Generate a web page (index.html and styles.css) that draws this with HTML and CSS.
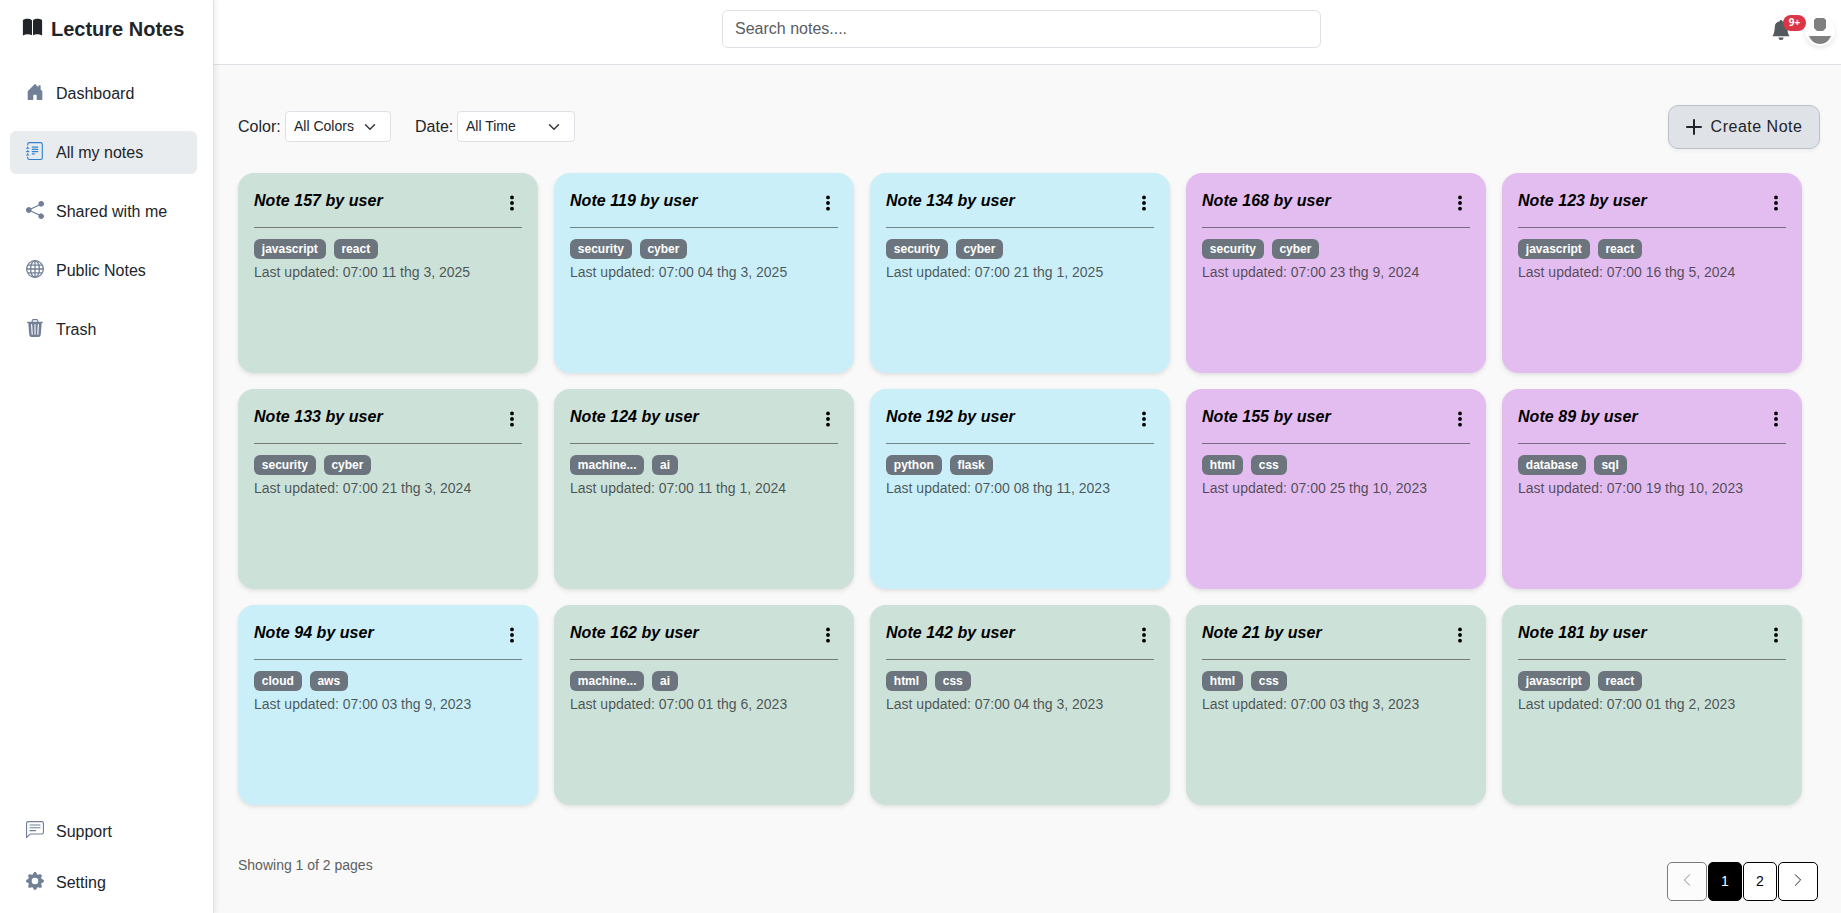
FILE: index.html
```html
<!DOCTYPE html>
<html lang="en">
<head>
<meta charset="utf-8">
<title>Lecture Notes</title>
<link rel="stylesheet" href="styles.css">
</head>
<body>
<svg class="sprite" aria-hidden="true">
  <symbol id="book" viewBox="0 0 21 21"><path d="M10 3.400C7.500 1.200 3.500 1.500.9 3.100V18.400C4 16.800 7.500 16.700 10 18.300zM11 3.400C13.500 1.200 17.500 1.500 20.100 3.100V18.400C17 16.800 13.500 16.700 11 18.300z"/></symbol>
  <symbol id="house" viewBox="0 0 16 16"><path d="M6.5 14.5v-3.505c0-.245.25-.495.5-.495h2c.25 0 .5.25.5.5v3.5a.5.5 0 0 0 .5.5h4a.5.5 0 0 0 .5-.5v-7a.5.5 0 0 0-.146-.354L13 5.793V2.5a.5.5 0 0 0-.5-.5h-1a.5.5 0 0 0-.5.5v1.293L8.354 1.146a.5.5 0 0 0-.708 0l-6 6A.5.5 0 0 0 1.500 7.500v7a.5.5 0 0 0 .5.5h4a.5.5 0 0 0 .5-.5"/></symbol>
  <symbol id="journal" viewBox="0 0 16 16"><path d="M5 10.500a.5.5 0 0 1 .5-.5h2a.5.5 0 0 1 0 1h-2a.5.5 0 0 1-.5-.5m0-2a.5.5 0 0 1 .5-.5h5a.5.5 0 0 1 0 1h-5a.5.5 0 0 1-.5-.5m0-2a.5.5 0 0 1 .5-.5h5a.5.5 0 0 1 0 1h-5a.5.5 0 0 1-.5-.5m0-2a.5.5 0 0 1 .5-.5h5a.5.5 0 0 1 0 1h-5a.5.5 0 0 1-.5-.5"/><path d="M3 0h10a2 2 0 0 1 2 2v12a2 2 0 0 1-2 2H3a2 2 0 0 1-2-2v-1h1v1a1 1 0 0 0 1 1h10a1 1 0 0 0 1-1V2a1 1 0 0 0-1-1H3a1 1 0 0 0-1 1v1H1V2a2 2 0 0 1 2-2"/><path d="M1 5v-.5a.5.5 0 0 1 1 0V5h.5a.5.5 0 0 1 0 1h-2a.5.5 0 0 1 0-1zm0 3v-.5a.5.5 0 0 1 1 0V8h.5a.5.5 0 0 1 0 1h-2a.5.5 0 0 1 0-1zm0 3v-.5a.5.5 0 0 1 1 0v.5h.5a.5.5 0 0 1 0 1h-2a.5.5 0 0 1 0-1z"/></symbol>
  <symbol id="share" viewBox="0 0 16 16"><path d="M11 2.500a2.500 2.500 0 1 1 .603 1.628l-6.718 3.120a2.500 2.500 0 0 1 0 1.504l6.718 3.120a2.500 2.500 0 1 1-.488.876l-6.718-3.120a2.500 2.500 0 1 1 0-3.256l6.718-3.120A2.500 2.500 0 0 1 11 2.500"/></symbol>
  <symbol id="globe" viewBox="0 0 16 16"><g fill="none" stroke="currentColor" stroke-width="1.150"><circle cx="8" cy="8" r="7.400"/><ellipse cx="8" cy="8" rx="3.900" ry="7.400"/><path d="M8 .5v15M.5 8h15M1.700 4.500h12.600M1.700 11.500h12.600"/></g></symbol>
  <symbol id="trash" viewBox="0 0 16 16"><path d="M11 1.500v1h3.500a.5.5 0 0 1 0 1h-.538l-.853 10.660A2 2 0 0 1 11.115 16h-6.230a2 2 0 0 1-1.994-1.840L2.038 3.500H1.500a.5.5 0 0 1 0-1H5v-1A1.500 1.500 0 0 1 6.500 0h3A1.500 1.500 0 0 1 11 1.500m-5 0v1h4v-1a.5.5 0 0 0-.5-.5h-3a.5.5 0 0 0-.5.5M4.500 5.029l.5 8.500a.5.5 0 1 0 .998-.06l-.5-8.500a.5.5 0 1 0-.998.06m6.530-.528a.5.5 0 0 0-.528.470l-.5 8.500a.5.5 0 0 0 .998.058l.5-8.500a.5.5 0 0 0-.470-.528M8 4.500a.5.5 0 0 0-.5.5v8.500a.5.5 0 0 0 1 0V5a.5.5 0 0 0-.5-.5"/></symbol>
  <symbol id="chat" viewBox="0 0 16 16"><path d="M14 1a1 1 0 0 1 1 1v8a1 1 0 0 1-1 1H4.414A2 2 0 0 0 3 11.586l-2 2V2a1 1 0 0 1 1-1zM2 0a2 2 0 0 0-2 2v12.793a.5.5 0 0 0 .854.353l2.853-2.853A1 1 0 0 1 4.414 12H14a2 2 0 0 0 2-2V2a2 2 0 0 0-2-2z"/><path d="M3 3.500a.5.5 0 0 1 .5-.5h9a.5.5 0 0 1 0 1h-9a.5.5 0 0 1-.5-.5M3 6a.5.5 0 0 1 .5-.5h9a.5.5 0 0 1 0 1h-9A.5.5 0 0 1 3 6m0 2.500a.5.5 0 0 1 .5-.5h5a.5.5 0 0 1 0 1h-5a.5.5 0 0 1-.5-.5"/></symbol>
  <symbol id="gear" viewBox="0 0 16 16"><path d="M9.405 1.050c-.413-1.400-2.397-1.400-2.810 0l-.1.340a1.464 1.464 0 0 1-2.105.872l-.310-.170c-1.283-.698-2.686.705-1.987 1.987l.169.311c.446.820.023 1.841-.872 2.105l-.340.100c-1.400.413-1.400 2.397 0 2.810l.340.100a1.464 1.464 0 0 1 .872 2.105l-.170.310c-.698 1.283.705 2.686 1.987 1.987l.311-.169a1.464 1.464 0 0 1 2.105.872l.100.340c.413 1.400 2.397 1.400 2.810 0l.100-.340a1.464 1.464 0 0 1 2.105-.872l.310.170c1.283.698 2.686-.705 1.987-1.987l-.169-.311a1.464 1.464 0 0 1 .872-2.105l.340-.100c1.400-.413 1.400-2.397 0-2.810l-.340-.100a1.464 1.464 0 0 1-.872-2.105l.170-.310c.698-1.283-.705-2.686-1.987-1.987l-.311.169a1.464 1.464 0 0 1-2.105-.872zM8 10.930a2.929 2.929 0 1 1 0-5.860 2.929 2.929 0 0 1 0 5.858z"/></symbol>
  <symbol id="bell" viewBox="0 0 16 16"><path d="M8 16a2 2 0 0 0 2-2H6a2 2 0 0 0 2 2m.995-14.901a1 1 0 1 0-1.990 0A5 5 0 0 0 3 6c0 1.098-.5 6-2 7h14c-1.500-1-2-5.902-2-7 0-2.420-1.720-4.440-4.005-4.901"/></symbol>
  <symbol id="dots" viewBox="0 0 16 16"><path d="M9.700 13a1.700 1.700 0 1 1-3.400 0 1.700 1.700 0 0 1 3.400 0m0-5a1.700 1.700 0 1 1-3.400 0 1.700 1.700 0 0 1 3.400 0m0-5a1.700 1.700 0 1 1-3.400 0 1.700 1.700 0 0 1 3.400 0"/></symbol>
  <symbol id="down" viewBox="0 0 16 16"><path fill="none" stroke="#343a40" stroke-linecap="round" stroke-linejoin="round" stroke-width="2" d="m2 5 6 6 6-6"/></symbol>
  <symbol id="left" viewBox="0 0 16 16"><path fill="none" stroke="currentColor" stroke-linecap="round" stroke-linejoin="round" d="M11 2 5 8l6 6"/></symbol>
  <symbol id="right" viewBox="0 0 16 16"><path fill="none" stroke="currentColor" stroke-linecap="round" stroke-linejoin="round" d="m5 2 6 6-6 6"/></symbol>
  <symbol id="plus" viewBox="0 0 16 16"><path fill="none" stroke="currentColor" stroke-linecap="round" stroke-width="2" d="M8 1v14M1 8h14"/></symbol>
</svg>
<div class="app">
  <aside class="sidebar">
    <div class="brand"><svg class="brand-icon"><use href="#book"/></svg><span>Lecture Notes</span></div>
    <nav class="nav">
      <a class="nav-link"><svg class="icon"><use href="#house"/></svg>Dashboard</a>
      <a class="nav-link active"><svg class="icon"><use href="#journal"/></svg>All my notes</a>
      <a class="nav-link"><svg class="icon"><use href="#share"/></svg>Shared with me</a>
      <a class="nav-link"><svg class="icon"><use href="#globe"/></svg>Public Notes</a>
      <a class="nav-link"><svg class="icon"><use href="#trash"/></svg>Trash</a>
    </nav>
    <nav class="nav nav-bottom">
      <a class="nav-link"><svg class="icon"><use href="#chat"/></svg>Support</a>
      <a class="nav-link"><svg class="icon"><use href="#gear"/></svg>Setting</a>
    </nav>
  </aside>
  <div class="page">
    <header class="topbar">
      <div class="search">Search notes....</div>
      <div class="account">
        <div class="bell"><svg class="bell-icon"><use href="#bell"/></svg><span class="count">9+</span></div>
        <svg class="avatar" viewBox="0 0 30 30"><path fill="#808080" d="M11 2h8l2 2v8l-3 3h-6l-3-3V4zM4 20h22c-2 5-6 8-11 8s-9-3-11-8z"/></svg>
      </div>
    </header>
    <main class="content">
      <div class="toolbar">
        <span class="label">Color:</span><div class="select select-color">All Colors<svg class="chevron"><use href="#down"/></svg></div>
        <span class="label label-date">Date:</span><div class="select select-date">All Time<svg class="chevron"><use href="#down"/></svg></div>
        <button class="create"><svg class="plus"><use href="#plus"/></svg>Create Note</button>
      </div>
      <section class="grid">
        <article class="card green"><div class="card-head"><h2>Note 157 by user</h2><svg class="dots"><use href="#dots"/></svg></div><div class="tags"><span>javascript</span><span>react</span></div><p>Last updated: 07:00 11 thg 3, 2025</p></article>
        <article class="card blue"><div class="card-head"><h2>Note 119 by user</h2><svg class="dots"><use href="#dots"/></svg></div><div class="tags"><span>security</span><span>cyber</span></div><p>Last updated: 07:00 04 thg 3, 2025</p></article>
        <article class="card blue"><div class="card-head"><h2>Note 134 by user</h2><svg class="dots"><use href="#dots"/></svg></div><div class="tags"><span>security</span><span>cyber</span></div><p>Last updated: 07:00 21 thg 1, 2025</p></article>
        <article class="card purple"><div class="card-head"><h2>Note 168 by user</h2><svg class="dots"><use href="#dots"/></svg></div><div class="tags"><span>security</span><span>cyber</span></div><p>Last updated: 07:00 23 thg 9, 2024</p></article>
        <article class="card purple"><div class="card-head"><h2>Note 123 by user</h2><svg class="dots"><use href="#dots"/></svg></div><div class="tags"><span>javascript</span><span>react</span></div><p>Last updated: 07:00 16 thg 5, 2024</p></article>
        <article class="card green"><div class="card-head"><h2>Note 133 by user</h2><svg class="dots"><use href="#dots"/></svg></div><div class="tags"><span>security</span><span>cyber</span></div><p>Last updated: 07:00 21 thg 3, 2024</p></article>
        <article class="card green"><div class="card-head"><h2>Note 124 by user</h2><svg class="dots"><use href="#dots"/></svg></div><div class="tags"><span>machine...</span><span>ai</span></div><p>Last updated: 07:00 11 thg 1, 2024</p></article>
        <article class="card blue"><div class="card-head"><h2>Note 192 by user</h2><svg class="dots"><use href="#dots"/></svg></div><div class="tags"><span>python</span><span>flask</span></div><p>Last updated: 07:00 08 thg 11, 2023</p></article>
        <article class="card purple"><div class="card-head"><h2>Note 155 by user</h2><svg class="dots"><use href="#dots"/></svg></div><div class="tags"><span>html</span><span>css</span></div><p>Last updated: 07:00 25 thg 10, 2023</p></article>
        <article class="card purple"><div class="card-head"><h2>Note 89 by user</h2><svg class="dots"><use href="#dots"/></svg></div><div class="tags"><span>database</span><span>sql</span></div><p>Last updated: 07:00 19 thg 10, 2023</p></article>
        <article class="card blue"><div class="card-head"><h2>Note 94 by user</h2><svg class="dots"><use href="#dots"/></svg></div><div class="tags"><span>cloud</span><span>aws</span></div><p>Last updated: 07:00 03 thg 9, 2023</p></article>
        <article class="card green"><div class="card-head"><h2>Note 162 by user</h2><svg class="dots"><use href="#dots"/></svg></div><div class="tags"><span>machine...</span><span>ai</span></div><p>Last updated: 07:00 01 thg 6, 2023</p></article>
        <article class="card green"><div class="card-head"><h2>Note 142 by user</h2><svg class="dots"><use href="#dots"/></svg></div><div class="tags"><span>html</span><span>css</span></div><p>Last updated: 07:00 04 thg 3, 2023</p></article>
        <article class="card green"><div class="card-head"><h2>Note 21 by user</h2><svg class="dots"><use href="#dots"/></svg></div><div class="tags"><span>html</span><span>css</span></div><p>Last updated: 07:00 03 thg 3, 2023</p></article>
        <article class="card green"><div class="card-head"><h2>Note 181 by user</h2><svg class="dots"><use href="#dots"/></svg></div><div class="tags"><span>javascript</span><span>react</span></div><p>Last updated: 07:00 01 thg 2, 2023</p></article>
      </section>
      <footer class="footer">
        <span class="showing">Showing 1 of 2 pages</span>
        <div class="pager">
          <button class="pg arrow disabled"><svg><use href="#left"/></svg></button>
          <button class="pg current">1</button>
          <button class="pg">2</button>
          <button class="pg arrow"><svg><use href="#right"/></svg></button>
        </div>
      </footer>
    </main>
  </div>
</div>
</body>
</html>
```
FILE: styles.css
```css
* { box-sizing: border-box; }
body { margin: 0; font-family: "Liberation Sans", Arial, sans-serif; font-size: 16px; line-height: 24px; color: #212529; background: #f9f9f9; }
svg { fill: currentColor; flex: none; display: block; }
.sprite { position: absolute; width: 0; height: 0; }
.app { display: flex; height: 913px; overflow: hidden; }
.sidebar { width: 214px; flex: none; display: flex; flex-direction: column; padding: 0 16px 9px 10px; background: #fff; border-right: 1px solid #dee2e6; box-shadow: 2px 0 5px rgba(0, 0, 0, .07); z-index: 1; }
.brand { display: flex; align-items: center; gap: 8px; height: 58px; padding-left: 12px; font-size: 20px; font-weight: 700; white-space: nowrap; }
.brand-icon { width: 21px; height: 21px; margin-top: -3px; }
.nav { display: flex; flex-direction: column; gap: 16px; margin-top: 14px; }
.nav-bottom { gap: 8px; margin-top: auto; }
.nav-link { display: flex; align-items: center; gap: 12px; height: 43px; padding-left: 16px; border-radius: 6px; white-space: nowrap; }
.nav-link.active { background: #e9ecef; }
.icon { width: 18px; height: 18px; color: #718096; margin-top: -3px; }
.active .icon { color: #3182ce; }
.page { flex: 1; display: flex; flex-direction: column; min-width: 0; }
.topbar { height: 65px; flex: none; display: flex; align-items: flex-start; background: #fff; border-bottom: 1px solid #dee2e6; padding: 10px 6px 0 508px; }
.search { width: 599px; height: 38px; padding: 6px 12px; border: 1px solid #dee2e6; border-radius: 6px; color: #595c5f; }
.account { display: flex; margin-left: auto; gap: 14px; padding-top: 6px; }
.bell { position: relative; padding-top: 4px; }
.bell-icon { width: 20px; height: 20px; color: #555a5e; }
.count { position: absolute; left: 12px; top: -1px; width: 23px; height: 16px; border-radius: 8px; background: #dc3545; color: #fff; font-family: "Open Sans", sans-serif; font-size: 10px; font-weight: 700; line-height: 15px; text-align: center; }
.avatar { width: 30px; height: 30px; border-radius: 50%; background: #fff; box-shadow: 0 2px 4px rgba(0, 0, 0, .1); }
.content { flex: 1; padding: 40px 21px 0 24px; display: flex; flex-direction: column; }
.toolbar { display: flex; align-items: center; height: 44px; }
.label { width: 47px; }
.label-date { width: 42px; margin-left: 24px; }
.select { display: flex; align-items: center; justify-content: space-between; height: 31px; margin-bottom: 1px; padding: 0 12px 0 8px; border: 1px solid #dee2e6; border-radius: 4px; background: #fff; font-size: 14px; line-height: 21px; }
.select-color { width: 106px; }
.select-date { width: 118px; }
.chevron { width: 16px; height: 12px; }
.create { display: flex; align-items: center; justify-content: center; gap: 9px; width: 152px; height: 44px; margin-left: auto; padding: 0; border: 1px solid #bdc1c7; border-radius: 10px; background: #dfe2e7; color: #212529; font: 16px/24px "Liberation Sans", Arial, sans-serif; letter-spacing: .5px; box-shadow: 0 2px 4px rgba(0, 0, 0, .05); }
.plus { width: 16px; height: 16px; }
.grid { display: grid; grid-template-columns: repeat(5, 300px); grid-auto-rows: 200px; gap: 16px; margin-top: 24px; }
.card { padding: 16px; border-radius: 16px; color: #000; box-shadow: 0 2px 4px rgba(0, 0, 0, .1); }
.green { background: #cce1d8; }
.blue { background: #caeff8; }
.purple { background: #e4bdf0; }
.card-head { display: flex; justify-content: space-between; height: 39px; padding-right: 1px; border-bottom: 1px solid color-mix(in srgb, currentColor 45%, transparent); }
.card h2 { margin: 0; font-size: 16px; line-height: 24px; letter-spacing: .04px; font-weight: 700; font-style: italic; }
.dots { width: 18px; height: 20px; margin-top: 4px; }
.tags { display: flex; gap: 8px; margin-top: 11px; }
.tags span { height: 20px; padding: 0 7.800px; border-radius: 6px; background: #6c757d; color: #fff; font-size: 12px; font-weight: 700; line-height: 20px; }
.card p { margin: 3px 0 0; font-size: 14px; line-height: 21px; color: rgba(33, 37, 41, .75); }
.footer { display: flex; justify-content: space-between; margin-top: 49px; }
.showing { padding-top: 1px; font-size: 14px; line-height: 21px; color: #5c5f62; }
.pager { display: flex; gap: 1px; padding: 8px 2px 0 0; }
.pg { display: flex; align-items: center; justify-content: center; width: 34px; height: 39px; padding: 0; border: 1px solid #000; border-radius: 5px; background: #fff; color: #000; font: 14px/21px "Liberation Sans", Arial, sans-serif; }
.arrow { width: 40px; }
.pg svg { width: 14px; height: 14px; margin-top: -3px; }
.current { background: #000; color: #fff; }
.disabled { opacity: .5; }
```
